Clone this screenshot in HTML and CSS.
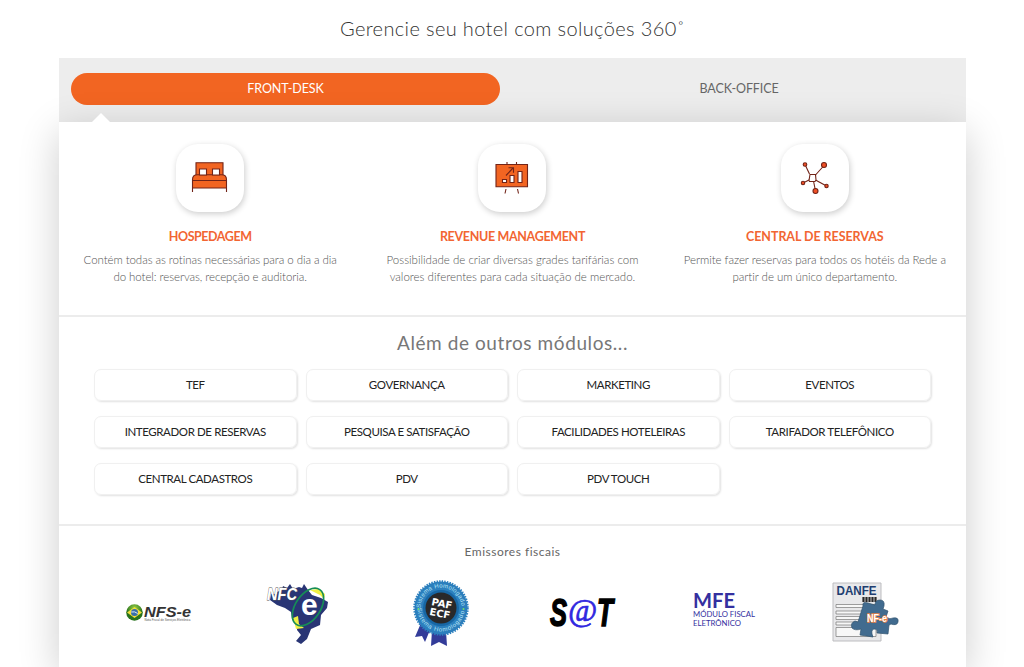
FILE: index.html
```html
<!DOCTYPE html>
<html lang="pt-BR">
<head>
<meta charset="utf-8">
<title>Soluções 360°</title>
<link rel="stylesheet" href="styles.css">
</head>
<body>
<main class="page">
  <h1 class="title">Gerencie seu hotel com soluções 360˚</h1>
  <nav class="tabs">
    <a class="tab tab-active">FRONT-DESK</a>
    <a class="tab">BACK-OFFICE</a>
  </nav>
  <section class="panel">
    <div class="features">
      <article class="feature">
        <div class="tile"><svg width="68" height="68" viewBox="0 0 68 68"><g fill="#f26522" stroke="#722418" stroke-width="1.1"><path d="M20 18.700h27v13H20z"/><path d="M16.500 38v-2.500q0-4.800 5-4.800h24q5 0 5 4.800V44h-34z"/><path d="M16.500 36.500h34M16.500 44v4M50.500 44v4" fill="none"/><path d="M23.500 25h7v6h-7zM36.500 25h7v6h-7z" fill="#fff"/></g></svg></div>
        <h2 class="name n1">HOSPEDAGEM</h2>
        <p class="text t1">Contém todas as rotinas necessárias para o dia a dia<br>do hotel: reservas, recepção e auditoria.</p>
      </article>
      <article class="feature">
        <div class="tile"><svg width="68" height="68" viewBox="0 0 68 68"><g stroke="#722418" stroke-width="1.1"><path d="M29 18v2M38.500 18v2M28 45l-1 4.500M39.500 45l1 4.500"/><path d="M18 20.500h31.500v22.300H18z" fill="#f26522"/><path d="M24.500 35.500h4v3h-4zM32 31.500h4v7h-4zM40 27.500h4v11h-4z" fill="#fff"/><path d="M28 31.500l7-7.500M30.500 23.800h5v5" fill="none"/></g></svg></div>
        <h2 class="name n2">REVENUE MANAGEMENT</h2>
        <p class="text">Possibilidade de criar diversas grades tarifárias com<br>valores diferentes para cada situação de mercado.</p>
      </article>
      <article class="feature">
        <div class="tile"><svg width="68" height="68" viewBox="0 0 68 68"><g stroke="#722418" stroke-width="1.100"><path d="M24 20.500l4.500 9.500M43.500 21l-9 10M22 39l7-3.500M45.500 42l-11-6M34.500 47l-2-10"/><path d="M29 30.500h5.500l.5 5.500-1 1.500h-5.500l-.5-1z" fill="#fff"/><g fill="#f04f25"><circle cx="24" cy="20.500" r="1.800"/><circle cx="43" cy="21" r="2.500"/><circle cx="22" cy="39" r="1.700"/><circle cx="45.500" cy="42" r="1.700"/><circle cx="34.500" cy="47" r="2.500"/></g></g></svg></div>
        <h2 class="name n3">CENTRAL DE RESERVAS</h2>
        <p class="text t3">Permite fazer reservas para todos os hotéis da Rede a<br>partir de um único departamento.</p>
      </article>
    </div>
    <div class="modules">
      <h2 class="subtitle">Além de outros módulos...</h2>
      <div class="grid">
        <div class="module">TEF</div><div class="module">GOVERNANÇA</div><div class="module">MARKETING</div><div class="module">EVENTOS</div>
        <div class="module">INTEGRADOR DE RESERVAS</div><div class="module">PESQUISA E SATISFAÇÃO</div><div class="module">FACILIDADES HOTELEIRAS</div><div class="module">TARIFADOR TELEFÔNICO</div>
        <div class="module">CENTRAL CADASTROS</div><div class="module">PDV</div><div class="module">PDV TOUCH</div>
      </div>
    </div>
    <div class="issuers">
      <h3 class="issuers-title">Emissores fiscais</h3>
      <div class="logos">
        <svg class="logo" viewBox="0 0 70 70">
          <defs><radialGradient id="g" cy=".25"><stop stop-color="#9bd348"/><stop offset="1" stop-color="#27721c"/></radialGradient></defs>
          <circle cx="10.500" cy="34.500" r="8.300" fill="url(#g)"/><path d="M3 34.500l7.500-5.500 7.500 5.500-7.500 5.500z" fill="#f2df3a"/><circle cx="10.500" cy="34.500" r="3.500" fill="#376fa9"/><path d="M7.200 34q3.500-1 6.500 1.500" stroke="#dceaf5" fill="none"/>
          <text x="20" y="38.500" class="nfs" textLength="47" lengthAdjust="spacingAndGlyphs">NFS-e</text>
          <text x="20.500" y="42.700" class="nfs-note" textLength="46">Nota Fiscal de Serviços Eletrônica</text>
        </svg>
        <svg class="logo" viewBox="0 0 70 70">
          <g transform="translate(-2 -1)"><path d="M14 15l5-2 1-4 4 2 3-4 3 5 6-2 3 1 2-4 4 6 4 5 9 3 7 4-1 6-6 7-1 10-9 4-4 10-6 5-5-3 5-6-4-5 0-6-5-5-1-7-6-4-8-3-7-5 1-6 6 0z" fill="#293575"/>
          <path d="M47 13l8-1 7 5-1 5-4-4zM30 41l5-2 1 8 5 4-8 1z" fill="#eff044"/>
          <ellipse cx="45" cy="30" rx="12.500" ry="21" transform="rotate(34 45 30)" stroke="#168d56" stroke-width="1.700" fill="none"/>
          <text x="4" y="23" class="nfc" textLength="30" lengthAdjust="spacingAndGlyphs">NFC</text><text x="38" y="38" class="nfc-e">e</text></g>
        </svg>
        <svg class="logo" viewBox="0 0 70 70">
          <defs><path id="up" d="M14.500 30a20.500 20.500 0 0 1 41 0"/><path id="down" d="M11.500 30a23.500 23.500 0 0 0 47 0"/></defs>
          <path d="M15 45l-6 14 7-1 3 6 5-12zM26 52l-1 16 8-4 8 4-1-15z" fill="#333c99"/>
          <circle cx="35" cy="30" r="26.500" fill="#2c7fbd" stroke="#2c7fbd" stroke-width="2.500" stroke-dasharray="1.400 1.200"/>
          <circle cx="35" cy="30" r="18" fill="#1767a5"/><circle cx="35" cy="30" r="15.500" fill="#29292b"/>
          <text class="seal"><textPath href="#up" textLength="62">Sistema Homologado</textPath></text>
          <text class="seal"><textPath href="#down" textLength="70">Sistema Homologado</textPath></text>
          <circle cx="12.500" cy="31" r="1" fill="#72df65"/><circle cx="57.500" cy="31" r="1" fill="#72df65"/>
          <g transform="rotate(11 35 30)"><text x="24.500" y="29" class="paf" textLength="21" lengthAdjust="spacingAndGlyphs">PAF</text><text x="24.500" y="39" class="paf" textLength="21" lengthAdjust="spacingAndGlyphs">ECF</text></g>
        </svg>
        <svg class="logo" viewBox="0 0 70 70">
          <text x="2" y="48" class="sat" textLength="17" lengthAdjust="spacingAndGlyphs">S</text><text x="20" y="43" class="at" textLength="29" lengthAdjust="spacingAndGlyphs">@</text><text x="49" y="48" class="sat" textLength="16" lengthAdjust="spacingAndGlyphs">T</text>
        </svg>
        <svg class="logo" viewBox="0 0 70 70">
          <text x="4" y="30" class="mfe" textLength="42" lengthAdjust="spacingAndGlyphs">MFE</text><text x="4" y="39" class="mfe-note" textLength="62" lengthAdjust="spacingAndGlyphs">MÓDULO FISCAL</text><text x="4" y="47.500" class="mfe-note" textLength="48" lengthAdjust="spacingAndGlyphs">ELETRÔNICO</text>
        </svg>
        <svg class="logo" viewBox="0 0 70 70">
          <path d="M3 5h48v58H3z" fill="#e8e8ea" stroke="#bdbdc0"/>
          <text x="6.500" y="16.500" class="danfe" textLength="40" lengthAdjust="spacingAndGlyphs">DANFE</text>
          <path d="M33.500 24v-5M36.500 24v-5M39.500 24v-5M42.500 24v-5M45.500 24v-5" stroke="#292929" stroke-width="2.200"/>
          <path d="M6 26.500h40v3H6zM6 33h40v3H6zM6 38.500h40v3H6zM6 44h40v3H6zM6 49.500h40v9H6z" fill="#f7f7f7" stroke="#777" stroke-width=".7"/>
          <path d="M33 28q-1-5 5-3l7 2q0-5 5-5t4 6l-1 3 5 2-2 6q4 3 7 1 6-1 5 4-1 4-7 2l-2 1-1 9-11-1q1-4-2-4-4 0-3 5l1 3-13-2 1-6q-6 2-9-1-2-5 3-7l3 1z" fill="#416b8f" stroke="#31536f" stroke-width=".7"/>
          <text x="37" y="44" class="nfe" textLength="20" lengthAdjust="spacingAndGlyphs">NF-e</text>
        </svg>
      </div>
    </div>
  </section>
</main>
</body>
</html>
```
FILE: styles.css
```css
* { box-sizing: border-box; }
html { overflow: hidden; }
body { margin: 0; height: 667px; overflow: hidden; background: #fff; font-family: Lato, sans-serif; color: #666; }
h1, h2, h3, p { margin: 0; font-weight: 400; }
.page { width: 907px; height: 667px; margin-left: 59px; }
.title { height: 58px; padding-top: 16px; line-height: 25px; font-size: 20px; font-weight: 300; text-align: center; color: #333; letter-spacing: .37px; white-space: nowrap; }
.tabs { display: flex; justify-content: space-between; height: 64px; padding: 15px 12px 17px; background: #ededed; }
.tab { width: 429px; border-radius: 16px; line-height: 31px; text-align: center; font-size: 12.500px; color: #666; letter-spacing: -.1px; }
.tab + .tab { width: 430px; }
.tab-active { background: #f26522; color: #fff; }
.panel { position: relative; height: 545px; background: #fff; box-shadow: 0 10px 38px rgba(0,0,0,.2); }
.panel::before { content: ""; position: absolute; left: 33px; top: -9px; border: 9px solid transparent; border-top: 0; border-bottom-color: #fff; }
.features { display: grid; grid-template-columns: repeat(3, 1fr); height: 195px; padding-top: 22px; border-bottom: 2px solid #ececec; }
.feature { display: flex; flex-direction: column; align-items: center; }
.tile { width: 68px; height: 68px; border-radius: 22px; background: #fff; box-shadow: 1px 2px 6px rgba(0,0,0,.2); }
.tile svg { display: block; }
.name { margin-top: 16px; line-height: 18px; font-size: 12.500px; font-weight: 700; color: #f26532; white-space: nowrap; }
.n1 { letter-spacing: -.45px; }
.n2 { letter-spacing: -.33px; }
.n3 { letter-spacing: -.06px; }
.text { margin-top: 5px; text-align: center; line-height: 17px; font-size: 11.500px; font-weight: 300; color: #555; white-space: nowrap; }
.t1 { letter-spacing: -.07px; }
.t3 { letter-spacing: -.04px; }
.modules { height: 209px; padding: 14px 35px 0; border-bottom: 2px solid #ececec; }
.subtitle { height: 38px; line-height: 23px; font-size: 19px; text-align: center; color: #777; letter-spacing: .58px; }
.grid { display: grid; grid-template-columns: repeat(4, 1fr); column-gap: 9px; row-gap: 15px; }
.module { height: 32px; border: 1px solid #f0f0f0; border-radius: 7px; box-shadow: 1px 1px 2px rgba(0,0,0,.12); line-height: 29px; font-size: 11.500px; text-align: center; color: #222; letter-spacing: -.4px; }
.issuers { padding-top: 17px; }
.issuers-title { line-height: 18px; text-align: center; font-size: 12px; color: #666; letter-spacing: .5px; }
.logos { display: flex; justify-content: space-between; padding: 17px 66px 0 65px; }
.logo { width: 70px; height: 70px; }
.nfs { font: italic bold 15px "Liberation Sans", sans-serif; fill: #333; }
.nfs-note { font: 3px "Liberation Sans", sans-serif; fill: #555; }
.nfc { font: italic bold 17px "Liberation Sans", sans-serif; fill: #fff; stroke: #555; stroke-width: .8px; paint-order: stroke; }
.nfc-e { font: bold 30px "Liberation Sans", sans-serif; fill: #fff; }
.seal { font: 6px "Liberation Sans", sans-serif; fill: #b9e6f7; }
.paf { font: bold 10px "DejaVu Sans", sans-serif; fill: #fff; }
.sat { font: italic bold 39px "Liberation Sans", sans-serif; fill: #000; stroke: #000; stroke-width: 1.500px; }
.at { font: italic 32px "Liberation Serif", serif; fill: #3027e0; stroke: #3027e0; stroke-width: .7px; }
.mfe { font: bold 20px Lato, sans-serif; fill: #3430a0; }
.mfe-note { font: 8px Lato, sans-serif; fill: #3430a0; }
.danfe { font: bold 13px "Liberation Sans", sans-serif; fill: #203d70; }
.nfe { font: bold 10px "Liberation Sans", sans-serif; fill: #fff; stroke: #e98245; stroke-width: 1.500px; paint-order: stroke; }
```
